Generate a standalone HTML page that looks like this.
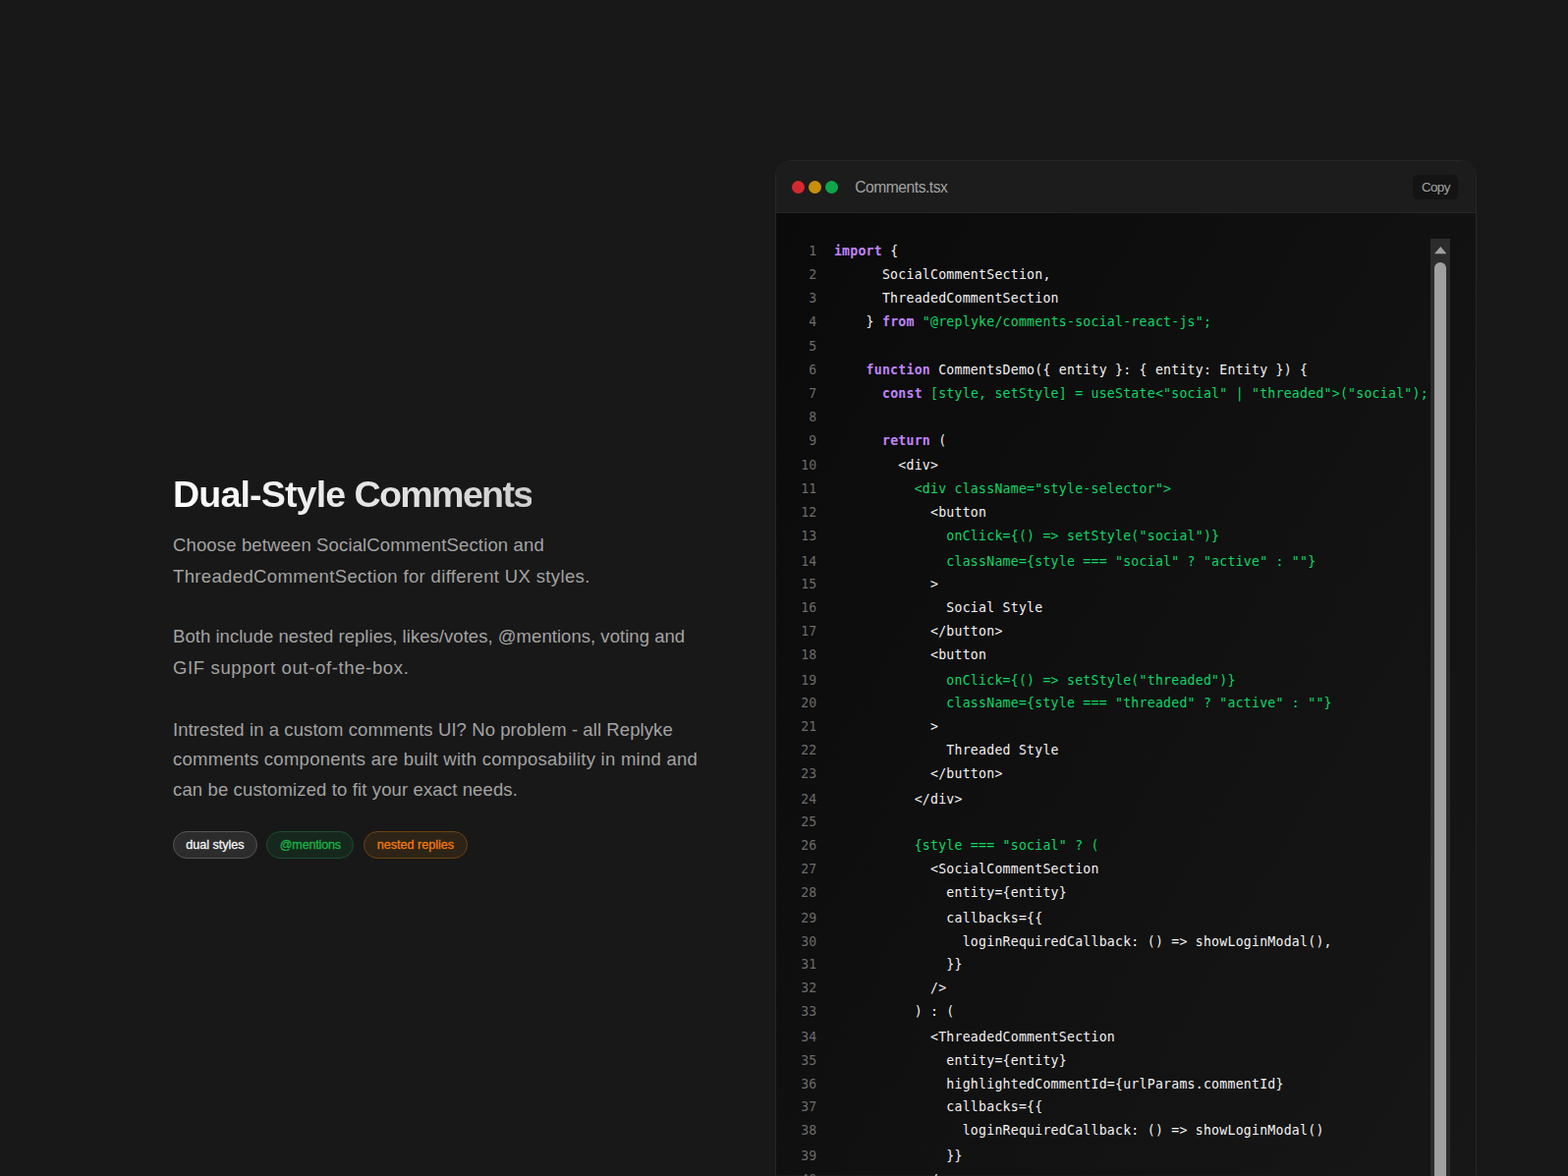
<!DOCTYPE html>
<html lang="en">
<head>
<meta charset="utf-8">
<title>Dual-Style Comments</title>
<style>
*{box-sizing:border-box;margin:0;padding:0}
html,body{width:1596px;height:1197px;overflow:hidden;background:#181818}
body{position:relative;font-family:"Liberation Sans",sans-serif;color:#a3a3a3}
.left{position:absolute;left:176px;top:0;width:600px}
h2{position:absolute;left:0;top:481px;font-size:37.7px;line-height:44px;font-weight:700;white-space:nowrap;letter-spacing:0;word-spacing:-1.2px;
 background:linear-gradient(90deg,#ffffff 0%,#cfcfcf 100%);-webkit-background-clip:text;background-clip:text;color:transparent;-webkit-text-fill-color:transparent}
.t{position:absolute;left:0;white-space:nowrap;font-size:18.5px;line-height:30px;color:#a3a3a3}
.tags{position:absolute;left:0;top:845.8px;height:27.8px}
.tag{position:absolute;top:0;height:27.8px;border-radius:14px;border:1.33px solid #555555;background:#2c2c2c;color:#f5f5f5;font-size:12.6px;line-height:27px;text-align:center;white-space:nowrap;-webkit-text-stroke:0.3px currentColor}
.tag.g{background:#16281d;border-color:#1b4d2e;color:#17b548}
.tag.o{background:#2d2417;border-color:#6b4212;color:#f27a0c}
.panel{position:absolute;left:788.5px;top:162.7px;width:714.6px;height:1100px;border:1.33px solid #262626;border-radius:16px;overflow:hidden;background:#0a0a0a}
.hd{position:relative;height:53.6px;background:#1c1c1c;border-bottom:1.33px solid #262626}
.dot{position:absolute;top:20.1px;width:13.3px;height:13.3px;border-radius:50%}
.fn{position:absolute;left:80.7px;top:17.3px;font-size:15.6px;letter-spacing:-0.45px;line-height:20px;color:#a3a3a3;white-space:nowrap}
.copy{position:absolute;left:648.2px;top:14.3px;width:46.8px;height:25px;border-radius:5.3px;background:#141414;color:#a3a3a3;font-size:13.4px;letter-spacing:-0.65px;line-height:25.6px;text-align:center;padding-left:0.6px}
.body{position:absolute;left:0;top:53.6px;right:0;height:990px;background:#171717 linear-gradient(120deg,#0a0a0a 0%,#171717 100%) 0 0/100% 979px no-repeat}
.code{position:absolute;left:0;top:0;right:0;font-family:"DejaVu Sans Mono","Liberation Mono",monospace;font-size:13.2px;letter-spacing:0.2352px;line-height:24.206px;color:#f3f3f3}
.row{height:24.206px;position:absolute;left:0;right:0}
.ln{position:absolute;left:0;width:42px;text-align:right;color:#6b6b6b}
.cd{position:absolute;left:59.4px;white-space:pre}
.k{color:#c084fc;font-weight:700}
.s{color:#0cd867}
.sb{position:absolute;left:666.2px;top:79px;width:20px;bottom:0;background:#2c2c2c}
.sb i{position:absolute;left:4.1px;top:24.6px;width:12.3px;bottom:-20px;border-radius:6.2px;background:#a0a0a0}
.sb svg{position:absolute;left:0;top:0}
</style>
</head>
<body>
<div class="left">
<h2><span style="letter-spacing:-0.9px">Dual-Style</span> <span style="letter-spacing:-1.74px">Comments</span></h2>
<div class="t" style="top:539.6px;letter-spacing:0.142px">Choose between SocialCommentSection and</div>
<div class="t" style="top:571.8px;letter-spacing:0.357px">ThreadedCommentSection for different UX styles.</div>
<div class="t" style="top:632.6px;letter-spacing:0.041px">Both include nested replies, likes/votes, @mentions, voting and</div>
<div class="t" style="top:664.8px;letter-spacing:0.641px">GIF support out-of-the-box.</div>
<div class="t" style="top:727.8px;letter-spacing:0.084px">Intrested in a custom comments UI? No problem - all Replyke</div>
<div class="t" style="top:757.6px;letter-spacing:0.265px">comments components are built with composability in mind and</div>
<div class="t" style="top:788.8px;letter-spacing:0.131px">can be customized to fit your exact needs.</div>
<div class="tags"><span class="tag" style="left:-0.2px;width:86.2px">dual styles</span><span class="tag g" style="left:95.3px;width:89px;letter-spacing:-0.2px">@mentions</span><span class="tag o" style="left:193.8px;width:106.3px">nested replies</span></div>
</div>
<div class="panel">
<div class="hd">
<span class="dot" style="left:16px;background:#d42a2f"></span>
<span class="dot" style="left:33.2px;background:#c8900a"></span>
<span class="dot" style="left:50.2px;background:#0ea54b"></span>
<span class="fn">Comments.tsx</span>
<span class="copy">Copy</span>
</div>
<div class="body">
<div class="code">
<div class="row" style="top:26.55px"><span class="ln">1</span><span class="cd"><span class="k">import</span> {</span></div>
<div class="row" style="top:50.55px"><span class="ln">2</span><span class="cd">      SocialCommentSection,</span></div>
<div class="row" style="top:74.55px"><span class="ln">3</span><span class="cd">      ThreadedCommentSection</span></div>
<div class="row" style="top:98.55px"><span class="ln">4</span><span class="cd">    } <span class="k">from</span><span class="s"> "@replyke/comments-social-react-js";</span></span></div>
<div class="row" style="top:123.55px"><span class="ln">5</span><span class="cd"></span></div>
<div class="row" style="top:147.55px"><span class="ln">6</span><span class="cd">    <span class="k">function</span> CommentsDemo({ entity }: { entity: Entity }) {</span></div>
<div class="row" style="top:171.55px"><span class="ln">7</span><span class="cd">      <span class="k">const</span><span class="s"> [style, setStyle] = useState&lt;"social" | "threaded"&gt;("social");</span></span></div>
<div class="row" style="top:195.55px"><span class="ln">8</span><span class="cd"></span></div>
<div class="row" style="top:219.55px"><span class="ln">9</span><span class="cd">      <span class="k">return</span> (</span></div>
<div class="row" style="top:244.55px"><span class="ln">10</span><span class="cd">        &lt;div&gt;</span></div>
<div class="row" style="top:268.55px"><span class="ln">11</span><span class="cd">          <span class="s">&lt;div className="style-selector"&gt;</span></span></div>
<div class="row" style="top:292.55px"><span class="ln">12</span><span class="cd">            &lt;button</span></div>
<div class="row" style="top:316.55px"><span class="ln">13</span><span class="cd">              <span class="s">onClick={() =&gt; setStyle("social")}</span></span></div>
<div class="row" style="top:342.55px"><span class="ln">14</span><span class="cd">              <span class="s">className={style === "social" ? "active" : ""}</span></span></div>
<div class="row" style="top:365.55px"><span class="ln">15</span><span class="cd">            &gt;</span></div>
<div class="row" style="top:389.55px"><span class="ln">16</span><span class="cd">              Social Style</span></div>
<div class="row" style="top:413.55px"><span class="ln">17</span><span class="cd">            &lt;/button&gt;</span></div>
<div class="row" style="top:437.55px"><span class="ln">18</span><span class="cd">            &lt;button</span></div>
<div class="row" style="top:463.55px"><span class="ln">19</span><span class="cd">              <span class="s">onClick={() =&gt; setStyle("threaded")}</span></span></div>
<div class="row" style="top:486.55px"><span class="ln">20</span><span class="cd">              <span class="s">className={style === "threaded" ? "active" : ""}</span></span></div>
<div class="row" style="top:510.55px"><span class="ln">21</span><span class="cd">            &gt;</span></div>
<div class="row" style="top:534.55px"><span class="ln">22</span><span class="cd">              Threaded Style</span></div>
<div class="row" style="top:558.55px"><span class="ln">23</span><span class="cd">            &lt;/button&gt;</span></div>
<div class="row" style="top:584.55px"><span class="ln">24</span><span class="cd">          &lt;/div&gt;</span></div>
<div class="row" style="top:607.55px"><span class="ln">25</span><span class="cd"></span></div>
<div class="row" style="top:631.55px"><span class="ln">26</span><span class="cd">          <span class="s">{style === "social" ? (</span></span></div>
<div class="row" style="top:655.55px"><span class="ln">27</span><span class="cd">            &lt;SocialCommentSection</span></div>
<div class="row" style="top:679.55px"><span class="ln">28</span><span class="cd">              entity={entity}</span></div>
<div class="row" style="top:705.55px"><span class="ln">29</span><span class="cd">              callbacks={{</span></div>
<div class="row" style="top:729.55px"><span class="ln">30</span><span class="cd">                loginRequiredCallback: () =&gt; showLoginModal(),</span></div>
<div class="row" style="top:752.55px"><span class="ln">31</span><span class="cd">              }}</span></div>
<div class="row" style="top:776.55px"><span class="ln">32</span><span class="cd">            /&gt;</span></div>
<div class="row" style="top:800.55px"><span class="ln">33</span><span class="cd">          ) : (</span></div>
<div class="row" style="top:826.55px"><span class="ln">34</span><span class="cd">            &lt;ThreadedCommentSection</span></div>
<div class="row" style="top:850.55px"><span class="ln">35</span><span class="cd">              entity={entity}</span></div>
<div class="row" style="top:874.55px"><span class="ln">36</span><span class="cd">              highlightedCommentId={urlParams.commentId}</span></div>
<div class="row" style="top:897.55px"><span class="ln">37</span><span class="cd">              callbacks={{</span></div>
<div class="row" style="top:921.55px"><span class="ln">38</span><span class="cd">                loginRequiredCallback: () =&gt; showLoginModal()</span></div>
<div class="row" style="top:947.55px"><span class="ln">39</span><span class="cd">              }}</span></div>
<div class="row" style="top:971.55px"><span class="ln">40</span><span class="cd">            /&gt;</span></div>
<div class="row" style="top:995.55px"><span class="ln">41</span><span class="cd">          )}</span></div>
<div class="row" style="top:1019.55px"><span class="ln">42</span><span class="cd">        &lt;/div&gt;</span></div>
</div>
</div>
<div class="sb"><svg width="20" height="24" viewBox="0 0 20 24"><polygon points="10.3,8 16.4,15.2 4.1,15.2" fill="#a0a0a0"/></svg><i></i></div>
</div>
</body>
</html>
